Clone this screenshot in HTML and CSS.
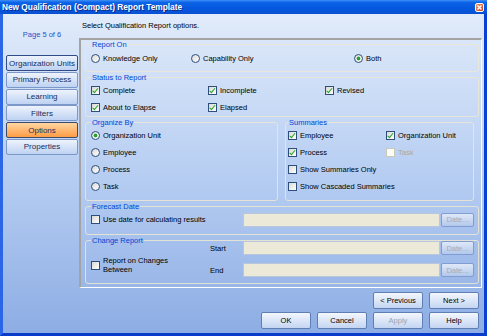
FILE: index.html
```html
<!DOCTYPE html>
<html lang="en">
<head>
  <meta charset="UTF-8" />
  <title>New Qualification (Compact) Report Template</title>
  <link rel="stylesheet" href="styles.css">
</head>
<body>
  <div class="window">
    <!-- Title Bar -->
    <div class="titlebar">
      <span class="titlebar__text">New Qualification (Compact) Report Template</span>
      <span class="titlebar__close">
        <svg width="7" height="7" viewBox="0 0 7 7"><path d="M1.5 1.5 L5.5 5.5 M5.5 1.5 L1.5 5.5" stroke="#fff" stroke-width="1.3" /></svg>
      </span>
    </div>

    <div class="client">
      <!-- Wizard Steps -->
      <div class="sidebar">
        <div class="sidebar__page">Page 5 of 6</div>
        <div class="sidebar__nav">
          <button class="navbtn navbtn--focus">Organization Units</button>
          <button class="navbtn">Primary Process</button>
          <button class="navbtn">Learning</button>
          <button class="navbtn">Filters</button>
          <button class="navbtn navbtn--active">Options</button>
          <button class="navbtn">Properties</button>
        </div>
      </div>

      <div class="main">
        <div class="main__intro">Select Qualification Report options.</div>

        <div class="panel">
          <!-- Report On -->
          <fieldset class="group group--report">
            <legend>Report On</legend>
            <div class="grid grid--report">
              <span class="opt"><span class="radio"></span>Knowledge Only</span>
              <span class="opt"><span class="radio"></span>Capability Only</span>
              <span class="opt"><span class="radio radio--on"></span>Both</span>
            </div>
          </fieldset>

          <!-- Status to Report -->
          <fieldset class="group">
            <legend>Status to Report</legend>
            <div class="grid grid--status">
              <span class="opt"><span class="check check--on"></span>Complete</span>
              <span class="opt"><span class="check check--on"></span>Incomplete</span>
              <span class="opt"><span class="check check--on"></span>Revised</span>
              <span class="opt"><span class="check check--on"></span>About to Elapse</span>
              <span class="opt"><span class="check check--on"></span>Elapsed</span>
            </div>
          </fieldset>

          <div class="split">
            <!-- Organize By -->
            <fieldset class="group group--organize">
              <legend>Organize By</legend>
              <span class="opt"><span class="radio radio--on"></span>Organization Unit</span>
              <span class="opt"><span class="radio"></span>Employee</span>
              <span class="opt"><span class="radio"></span>Process</span>
              <span class="opt"><span class="radio"></span>Task</span>
            </fieldset>

            <!-- Summaries -->
            <fieldset class="group group--summaries">
              <legend>Summaries</legend>
              <div class="grid grid--summaries">
                <span class="opt"><span class="check check--on"></span>Employee</span>
                <span class="opt"><span class="check check--on"></span>Organization Unit</span>
                <span class="opt"><span class="check check--on"></span>Process</span>
                <span class="opt opt--disabled"><span class="check check--disabled"></span>Task</span>
                <span class="opt span2"><span class="check"></span>Show Summaries Only</span>
                <span class="opt span2"><span class="check"></span>Show Cascaded Summaries</span>
              </div>
            </fieldset>
          </div>

          <!-- Forecast Date -->
          <fieldset class="group group--forecast">
            <legend>Forecast Date</legend>
            <div class="grid grid--forecast">
              <span class="opt"><span class="check"></span>Use date for calculating results</span>
              <span class="field"></span>
              <button class="datebtn" disabled>Date...</button>
            </div>
          </fieldset>

          <!-- Change Report -->
          <fieldset class="group group--change">
            <legend>Change Report</legend>
            <div class="grid grid--change">
              <span class="opt opt--multi"><span class="check"></span><span>Report on Changes<br>Between</span></span>
              <span class="fieldlabel">Start</span>
              <span class="field"></span>
              <button class="datebtn" disabled>Date...</button>
              <span class="fieldlabel">End</span>
              <span class="field"></span>
              <button class="datebtn" disabled>Date...</button>
            </div>
          </fieldset>
        </div>

        <!-- Wizard Buttons -->
        <div class="btnrow btnrow--nav">
          <button class="btn">&lt; Previous</button>
          <button class="btn">Next &gt;</button>
        </div>
        <div class="btnrow btnrow--actions">
          <button class="btn">OK</button>
          <button class="btn">Cancel</button>
          <button class="btn" disabled>Apply</button>
          <button class="btn">Help</button>
        </div>
      </div>
    </div>
  </div>
</body>
</html>
```

FILE: styles.css
```css
/* Global */
* {
  box-sizing: border-box;
}
body {
  margin: 0;
  font-family: 'Liberation Sans', Arial, sans-serif;
  font-size: 7.5px;
  color: #000;
  background: #fff;
}
button {
  font-family: inherit;
  font-size: 7.5px;
  padding: 0;
  margin: 0;
  cursor: pointer;
}
/* Window frame */
.window {
  width: 487px;
  height: 336px;
  display: flex;
  flex-direction: column;
}
.titlebar {
  height: 14px;
  flex: none;
  display: flex;
  align-items: center;
  justify-content: space-between;
  padding: 0 3px 0 2px;
  background: linear-gradient(#3d8ff7 0%, #0c63e6 18%, #0558df 60%, #0850d2 100%);
  color: #fff;
  font-weight: bold;
  font-size: 8.3px;
  text-shadow: 1px 1px 0 #0a2a8c;
}
.titlebar__close {
  width: 9px;
  height: 9px;
  border: 1px solid #fff;
  border-radius: 2px;
  background: linear-gradient(135deg, #f0946a, #c8421a);
  display: flex;
  align-items: center;
  justify-content: center;
}
.client {
  flex: 1;
  display: flex;
  border-left: 3px solid #2a66e6;
  border-right: 3px solid #0a40d4;
  border-bottom: 3px solid #0a3ccc;
  background: linear-gradient(#e1ebfa 0%, #b7cef2 50%, #8dade4 100%);
}
/* Sidebar */
.sidebar {
  width: 76px;
  flex: none;
  padding: 16px 1px 0 3px;
}
.sidebar__page {
  height: 9px;
  line-height: 9px;
  text-align: center;
  color: #2354c8;
  margin-bottom: 16px;
}
.sidebar__nav {
  display: flex;
  flex-direction: column;
  gap: 0.75px;
}
.navbtn {
  height: 16px;
  font-size: 8px;
  color: #172f5c;
  border: 1px solid #7b98c8;
  border-radius: 2px;
  background: linear-gradient(#eef3fd, #bed2f2);
}
.navbtn--focus {
  border-color: #2f4c86;
}
.navbtn--active {
  border-color: #3d4a6a;
  background: linear-gradient(#ffd6a2, #ff9c45);
}
/* Main area */
.main {
  flex: 1;
  min-width: 0;
  display: flex;
  flex-direction: column;
}
.main__intro {
  height: 24px;
  padding: 7px 0 0 3px;
  line-height: 9px;
}
.panel {
  height: 250px;
  flex: none;
  margin-right: 2px;
  border-style: solid;
  border-width: 2px 1px 1px 2px;
  border-color: #a3a3a3 #fff #fff #a3a3a3;
  padding: 0 2px 0 4px;
  display: flex;
  flex-direction: column;
  gap: 1px;
}
/* Group boxes */
.group {
  margin: 0;
  min-width: 0;
  padding: 0 4px 0 5px;
  border: 1px solid rgba(236, 231, 212, 0.85);
  border-radius: 3px;
}
.group legend {
  padding: 0 1px;
  line-height: 9px;
  color: #0046d5;
}
.group--report { padding-top: 1px; padding-bottom: 4px; }
.group--organize { width: 193px; padding-bottom: 5px; }
.group--summaries { width: 189px; padding-left: 2px; padding-bottom: 5px; }
.group--forecast { padding-bottom: 6px; }
.group--change { padding-bottom: 6px; }
.split {
  display: flex;
  gap: 7px;
}
.grid {
  display: grid;
  align-items: center;
}
.grid--report { grid-template-columns: 100px 163px 1fr; }
.grid--status { grid-template-columns: 117px 117px 1fr; }
.grid--summaries { grid-template-columns: 98px 1fr; }
.grid--forecast { grid-template-columns: 152px 198px 33px; }
.grid--change {
  margin-top: -4px;
  grid-template-columns: 119px 33px 198px 33px;
  grid-template-rows: 14px 14px;
  row-gap: 8px;
}
.span2 {
  grid-column: span 2;
}
/* Options */
.opt {
  display: flex;
  align-items: center;
  gap: 3px;
  height: 17px;
  white-space: nowrap;
}
.opt--disabled {
  color: #aca899;
}
.opt--multi {
  grid-row: 1 / span 2;
  height: auto;
  line-height: 9px;
  align-self: end;
  margin-bottom: 3px;
}
.radio {
  width: 9px;
  height: 9px;
  flex: none;
  border: 1px solid #2e4f7c;
  border-radius: 50%;
  background: linear-gradient(135deg, #d9d9d3, #fff);
}
.radio--on {
  background: radial-gradient(circle, #27a327 0, #27a327 1.6px, rgba(255,255,255,0) 2.2px), linear-gradient(135deg, #d9d9d3, #fff);
}
.check {
  width: 9px;
  height: 9px;
  flex: none;
  position: relative;
  border: 1px solid #2e4f7c;
  background: linear-gradient(135deg, #d9d9d3, #fff);
}
.check--on::after {
  content: '';
  position: absolute;
  left: 2.3px;
  top: 0.3px;
  width: 2px;
  height: 4.5px;
  border: solid #21a121;
  border-width: 0 1.6px 1.6px 0;
  transform: rotate(40deg);
}
.check--disabled {
  border-color: #cac8bb;
  background: #fbfbf8;
}
/* Text fields */
.field {
  height: 14px;
  margin-right: 1px;
  background: #ece9d8;
  border: 1px solid #b9c7dc;
}
.fieldlabel {
  line-height: 9px;
}
.datebtn {
  width: 33px;
  height: 14px;
  color: #a2abb9;
  border: 1px solid #7f9dd2;
  border-radius: 2px;
  background: linear-gradient(#dfe8f8, #b3c8ec);
  cursor: default;
}
/* Dialog buttons */
.btnrow {
  height: 17px;
  flex: none;
  display: flex;
  justify-content: flex-end;
  gap: 6px;
  padding-right: 5px;
}
.btnrow--nav { margin-top: 4px; }
.btnrow--actions { margin-top: 3px; }
.btn {
  width: 50px;
  height: 17px;
  color: #000;
  border: 1px solid #5f7eb3;
  border-radius: 2px;
  background: linear-gradient(#f3f7fd, #c4d5f2);
}
.btn:disabled {
  color: #9aa4b4;
  cursor: default;
}
```
